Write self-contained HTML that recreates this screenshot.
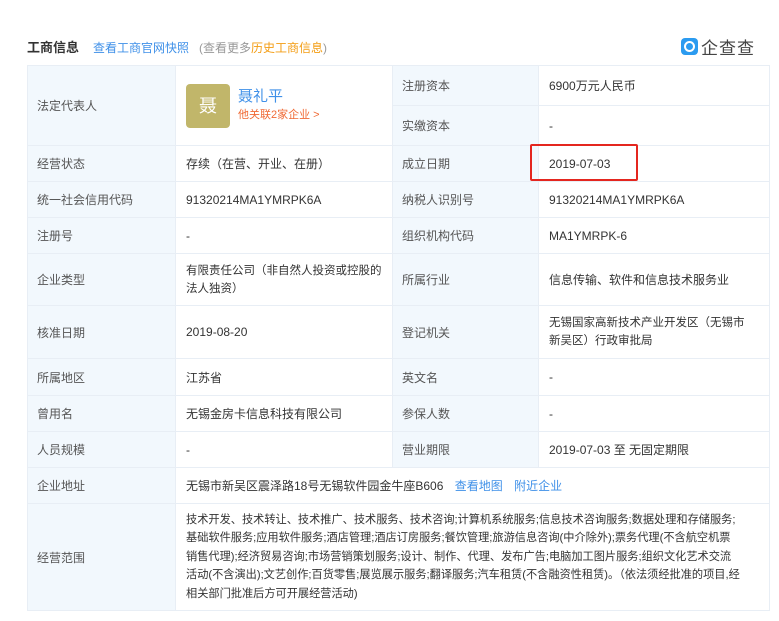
<!DOCTYPE html>
<html><head><meta charset="utf-8"><style>
body{margin:0;background:#fff;font-family:"Liberation Sans","Noto Sans CJK SC",sans-serif;width:779px;height:621px;overflow:hidden;position:relative;color:#333}
.hd{position:absolute;top:37px;left:27px;font-size:12px;color:#999;white-space:nowrap}
.hd b{color:#333;font-size:13px;margin-right:14px}
.hd a{color:#3f90e8;margin-right:10px}
.hd .o{color:#f39c12}
.logo{position:absolute;top:34px;left:681px;display:flex;align-items:center;font-size:17px;color:#444;letter-spacing:1px}
.logo i{display:inline-block;width:17px;height:17px;background:#2b9bf0;border-radius:4px;margin-right:3px;position:relative}
.logo i:after{content:"";position:absolute;left:3px;top:3px;width:7px;height:7px;border:2px solid #fff;border-radius:50%}
table{position:absolute;top:65px;left:27px;width:743px;border-collapse:collapse;font-size:12px;table-layout:fixed}
td{border:1px solid #e8eef5;padding:0 10px;vertical-align:middle}
td.l{background:#f2f8fd;color:#555;padding-left:9px}
td.v{color:#333}
.av{display:inline-block;width:44px;height:44px;background:#c1b66a;color:#fff;font-size:18px;border-radius:4px;text-align:center;line-height:44px;vertical-align:middle}
.red{position:absolute;left:530px;top:144px;width:104px;height:33px;border:2px solid #e4261f;border-radius:2px}
a{text-decoration:none}
.nw{white-space:nowrap;line-height:18px;font-size:11.5px}
</style></head><body>
<div class="hd"><b>工商信息</b><a>查看工商官网快照</a>(查看更多<span class="o">历史工商信息</span>)</div>
<div class="logo"><i></i>企查查</div>
<table>
<colgroup><col style="width:148px"><col style="width:217px"><col style="width:146px"><col></colgroup>
<tr style="height:40px"><td class="l" rowspan="2">法定代表人</td><td class="v" rowspan="2"><span class="av">聂</span><span style="display:inline-block;vertical-align:middle;margin-left:8px;line-height:17px"><span style="color:#3f90e8;font-size:15px">聂礼平</span><br><span style="color:#f06a35;font-size:11px">他关联2家企业 &gt;</span></span></td><td class="l">注册资本</td><td class="v">6900万元人民币</td></tr>
<tr style="height:40px"><td class="l">实缴资本</td><td class="v">-</td></tr>
<tr style="height:36px"><td class="l">经营状态</td><td class="v">存续（在营、开业、在册）</td><td class="l">成立日期</td><td class="v">2019-07-03</td></tr>
<tr style="height:36px"><td class="l">统一社会信用代码</td><td class="v">91320214MA1YMRPK6A</td><td class="l">纳税人识别号</td><td class="v">91320214MA1YMRPK6A</td></tr>
<tr style="height:36px"><td class="l">注册号</td><td class="v">-</td><td class="l">组织机构代码</td><td class="v">MA1YMRPK-6</td></tr>
<tr style="height:52px"><td class="l">企业类型</td><td class="v nw">有限责任公司（非自然人投资或控股的<br>法人独资）</td><td class="l">所属行业</td><td class="v">信息传输、软件和信息技术服务业</td></tr>
<tr style="height:53px"><td class="l">核准日期</td><td class="v">2019-08-20</td><td class="l">登记机关</td><td class="v nw">无锡国家高新技术产业开发区（无锡市<br>新吴区）行政审批局</td></tr>
<tr style="height:37px"><td class="l">所属地区</td><td class="v">江苏省</td><td class="l">英文名</td><td class="v">-</td></tr>
<tr style="height:36px"><td class="l">曾用名</td><td class="v">无锡金房卡信息科技有限公司</td><td class="l">参保人数</td><td class="v">-</td></tr>
<tr style="height:36px"><td class="l">人员规模</td><td class="v">-</td><td class="l">营业期限</td><td class="v">2019-07-03 至 无固定期限</td></tr>
<tr style="height:36px"><td class="l">企业地址</td><td class="v" colspan="3">无锡市新吴区震泽路18号无锡软件园金牛座B606 <a style="color:#3f90e8;margin-left:8px">查看地图</a> <a style="color:#3f90e8;margin-left:8px">附近企业</a></td></tr>
<tr style="height:107px"><td class="l">经营范围</td><td class="v" colspan="3" style="line-height:18.5px;font-size:11.2px;white-space:nowrap;overflow:hidden">技术开发、技术转让、技术推广、技术服务、技术咨询;计算机系统服务;信息技术咨询服务;数据处理和存储服务;<br>基础软件服务;应用软件服务;酒店管理;酒店订房服务;餐饮管理;旅游信息咨询(中介除外);票务代理(不含航空机票<br>销售代理);经济贸易咨询;市场营销策划服务;设计、制作、代理、发布广告;电脑加工图片服务;组织文化艺术交流<br>活动(不含演出);文艺创作;百货零售;展览展示服务;翻译服务;汽车租赁(不含融资性租赁)。（依法须经批准的项目,经<br>相关部门批准后方可开展经营活动)</td></tr>
</table>
<div class="red"></div>
</body></html>
